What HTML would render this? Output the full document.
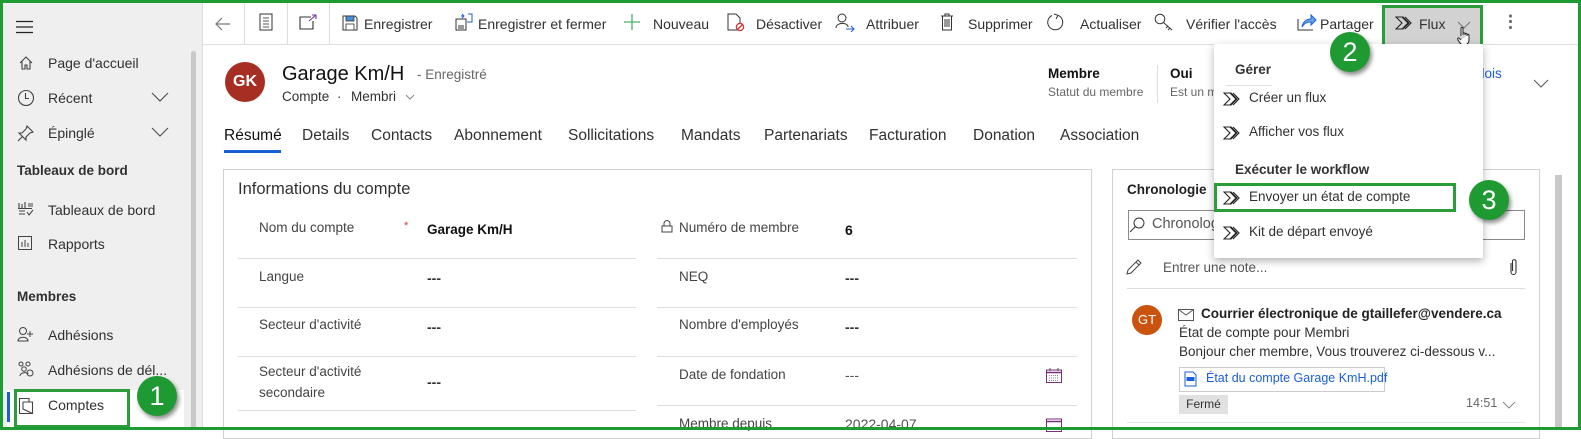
<!DOCTYPE html>
<html><head><meta charset="utf-8"><style>
*{margin:0;padding:0;box-sizing:border-box}
body{width:1581px;height:430px;overflow:hidden;background:#fff;font-family:"Liberation Sans",sans-serif;color:#323130;position:relative;font-size:14px}
.a{position:absolute;white-space:nowrap}
.side{position:absolute;left:0;top:0;width:203px;height:430px;background:#efefef;border-right:1px solid #ddd}
.tb{position:absolute;left:203px;top:0;right:0;height:45px;border-bottom:1px solid #ddd;background:#fff}
.sep{position:absolute;top:3px;width:1px;height:41px;background:#ddd}
.hline{position:absolute;height:1px;background:#ddd}
.badge{position:absolute;width:40px;height:40px;border-radius:50%;background:#1f9a33;color:#fff;font-size:27px;text-align:center;line-height:40px;box-shadow:2px 3px 4px rgba(0,0,0,.45)}
.gbox{position:absolute;border:3px solid #2a9d3a}
.ic{position:absolute}
</style></head><body>

<div class="side"></div>
<div class="a" style="left:191px;top:51px;width:5px;height:379px;background:#c8c8c8;border-radius:3px"></div>
<svg class="ic" style="left:16px;top:20px" width="18" height="14"><path d="M0 1.5H17M0 7H17M0 12.5H17" stroke="#222" stroke-width="1.3"/></svg>
<svg class="ic" style="left:18px;top:55px" width="16" height="16"><path d="M2 8L8 2L14 8M4 6V14H7V10H9V14H12V6" fill="none" stroke="#444" stroke-width="1.1"/></svg>
<div class="a" style="left:48px;top:55px">Page d'accueil</div>
<svg class="ic" style="left:17px;top:89px" width="18" height="18"><circle cx="9" cy="9" r="7.5" fill="none" stroke="#444" stroke-width="1.1"/><path d="M8.5 4V9.5H12" fill="none" stroke="#444" stroke-width="1.1"/></svg>
<div class="a" style="left:48px;top:90px">Récent</div>
<svg class="ic" style="left:151px;top:92px" width="18" height="10"><path d="M1 1L9 9L17 1" fill="none" stroke="#555" stroke-width="1.2"/></svg>
<svg class="ic" style="left:17px;top:125px" width="17" height="17"><path d="M10 1L16 7L13 8L9 12L9 15L2 8L5 8L9 4ZM5.5 11.5L1 16" fill="none" stroke="#444" stroke-width="1.1"/></svg>
<div class="a" style="left:48px;top:125px">Épinglé</div>
<svg class="ic" style="left:151px;top:127px" width="18" height="10"><path d="M1 1L9 9L17 1" fill="none" stroke="#555" stroke-width="1.2"/></svg>
<div class="a" style="left:17px;top:163px;font-weight:bold;font-size:13.5px">Tableaux de bord</div>
<svg class="ic" style="left:17px;top:201px" width="17" height="17"><path d="M2 2V7M5 3V7M8 1V7M1 7.5H15M11 3H16M11 5H16M2 10H8M2 13H8M10 11L12 14L16 9" fill="none" stroke="#444" stroke-width="1.1"/></svg>
<div class="a" style="left:48px;top:202px">Tableaux de bord</div>
<svg class="ic" style="left:17px;top:235px" width="16" height="16"><rect x="1.5" y="1.5" width="13" height="13" fill="none" stroke="#444"/><path d="M5 12V7M8 12V5M11 12V8" stroke="#444"/></svg>
<div class="a" style="left:48px;top:236px">Rapports</div>
<div class="a" style="left:17px;top:289px;font-weight:bold;font-size:13.5px">Membres</div>
<svg class="ic" style="left:17px;top:326px" width="18" height="16"><circle cx="6" cy="5" r="3.5" fill="none" stroke="#444"/><path d="M1 15C1 10 11 10 11 15ZM13 5V11M10 8H16" fill="none" stroke="#444"/></svg>
<div class="a" style="left:48px;top:327px">Adhésions</div>
<svg class="ic" style="left:17px;top:361px" width="18" height="16"><circle cx="4" cy="3" r="2" fill="none" stroke="#444"/><circle cx="11" cy="3" r="2" fill="none" stroke="#444"/><circle cx="7" cy="8" r="2.3" fill="none" stroke="#444"/><circle cx="13" cy="12" r="3" fill="none" stroke="#444"/><path d="M3 15C3 11 11 11 11 13" fill="none" stroke="#444"/></svg>
<div class="a" style="left:48px;top:362px">Adhésions de dél...</div>
<div class="a" style="left:7px;top:390px;width:177px;height:40px;background:#fff"></div>
<div class="a" style="left:7px;top:392px;width:3px;height:30px;background:#1a5fd6"></div>
<svg class="ic" style="left:18px;top:397px" width="16" height="18"><path d="M1.5 1.5H11V5H14.5V16.5H1.5ZM5 5H11M5 5V12L14.5 16.5" fill="none" stroke="#444" stroke-width="1.1"/></svg>
<div class="a" style="left:48px;top:397px">Comptes</div>
<div class="gbox" style="left:14px;top:389px;width:116px;height:39px"></div>
<div class="badge" style="left:137px;top:376px">1</div>

<div class="tb"></div>
<div class="sep" style="left:244px"></div><div class="sep" style="left:287px"></div><div class="sep" style="left:329px"></div>
<svg class="ic" style="left:215px;top:17px" width="16" height="14"><path d="M15 7H1M7 1L1 7L7 13" fill="none" stroke="#777" stroke-width="1.2"/></svg>
<svg class="ic" style="left:259px;top:13px" width="14" height="18"><rect x="1" y="1" width="12" height="16" fill="none" stroke="#333"/><path d="M4 5H10M4 8H10M4 11H10M4 14H10" stroke="#555"/></svg>
<svg class="ic" style="left:299px;top:14px" width="18" height="16"><path d="M12 3H1V15H14V7" fill="none" stroke="#333" stroke-width="1.1"/><path d="M10 7L17 1M13 1H17V5" fill="none" stroke="#7a2fa0" stroke-width="1.1"/></svg>
<svg class="ic" style="left:342px;top:15px" width="16" height="16"><path d="M1 1H13L15 3V15H1Z" fill="#fff" stroke="#333"/><rect x="4" y="1" width="8" height="5" fill="#4a90d9" stroke="#333" stroke-width=".8"/><rect x="4" y="9" width="8" height="6" fill="#fff" stroke="#333" stroke-width=".8"/></svg>
<div class="a" style="left:364px;top:16px">Enregistrer</div>
<svg class="ic" style="left:455px;top:13px" width="18" height="18"><path d="M1 6H11V17H1Z" fill="#fff" stroke="#333"/><rect x="3" y="12" width="6" height="5" fill="#999"/><path d="M6 3H9M7 1L9 3L7 5M13 1H17V9H12" fill="none" stroke="#1a5fd6"/></svg>
<div class="a" style="left:478px;top:16px">Enregistrer et fermer</div>
<svg class="ic" style="left:624px;top:14px" width="16" height="16"><path d="M8 0V16M0 8H16" stroke="#49b06b" stroke-width="1.3"/></svg>
<div class="a" style="left:653px;top:16px">Nouveau</div>
<svg class="ic" style="left:727px;top:13px" width="18" height="19"><path d="M1 1H9L13 5V17H1Z" fill="none" stroke="#333"/><circle cx="13" cy="14" r="3.6" fill="#fff" stroke="#d13438" stroke-width="1.3"/><path d="M10.5 16.5L15.5 11.5" stroke="#d13438" stroke-width="1.3"/></svg>
<div class="a" style="left:756px;top:16px">Désactiver</div>
<svg class="ic" style="left:835px;top:13px" width="20" height="19"><circle cx="7" cy="5" r="4" fill="none" stroke="#333"/><path d="M1 15C1 9 13 9 13 14" fill="none" stroke="#333"/><path d="M11 16H19M16 13L19 16L16 19" fill="none" stroke="#1a5fd6"/></svg>
<div class="a" style="left:866px;top:16px">Attribuer</div>
<svg class="ic" style="left:940px;top:13px" width="14" height="18"><path d="M1 3H13M5 3V1H9V3M2.5 3V17H11.5V3M5 6V14M7 6V14M9 6V14" fill="none" stroke="#333"/></svg>
<div class="a" style="left:968px;top:16px">Supprimer</div>
<svg class="ic" style="left:1046px;top:13px" width="19" height="19"><path d="M6 2.5A7.5 7.5 0 1 0 12 2.3M12 2.3L8 1M12 2.3L10 6" fill="none" stroke="#333"/></svg>
<div class="a" style="left:1080px;top:16px">Actualiser</div>
<svg class="ic" style="left:1154px;top:13px" width="20" height="18"><circle cx="6" cy="6" r="4.8" fill="none" stroke="#333"/><path d="M9.5 9.5L18 17M14 13L12 15M16 15L14 17" fill="none" stroke="#333"/></svg>
<div class="a" style="left:1186px;top:16px">Vérifier l'accès</div>
<svg class="ic" style="left:1297px;top:13px" width="20" height="18"><path d="M1 6V17H16" fill="none" stroke="#333"/><path d="M5 14C6 8 10 6 14 6V2L19 7L14 12V9C10 9 7 10 5 14Z" fill="#6aa6e0" stroke="#1a5fd6"/></svg>
<div class="a" style="left:1320px;top:16px">Partager</div>
<div class="a" style="left:1382px;top:5px;width:101px;height:41px;background:#d2d2d2"></div>
<svg class="ic" style="left:1395px;top:16px" width="18" height="14"><path d="M1 1H8L14 7L8 13H1L7 7ZM7 1L13 7L7 13M10 1L16 7L10 13" fill="none" stroke="#222" stroke-width="1.1"/></svg>
<div class="a" style="left:1419px;top:16px">Flux</div>
<svg class="ic" style="left:1457px;top:21px" width="14" height="8"><path d="M1 1L7 7L13 1" fill="none" stroke="#777"/></svg>
<svg class="ic" style="left:1456px;top:26px" width="16" height="20"><path d="M5 10V2.5C5 1 7 1 7 2.5V9M7 8C7 6.5 9 6.5 9 8V9M9 8.5C9 7 11 7 11 8.5V10M11 9.5C11 8 13 8 13 9.5V14C13 17 11 19 8 19C5 19 4 17 2 14C1 12 3 11 4 13L5 14" fill="#fff" stroke="#222" stroke-width="1"/></svg>
<div class="gbox" style="left:1382px;top:5px;width:101px;height:42px"></div>
<div class="a" style="left:1502px;top:12px;font-size:17px;font-weight:bold;color:#555">⋮</div>

<div class="a" style="left:225px;top:62px;width:40px;height:40px;border-radius:50%;background:#a72e22;color:#fff;font-weight:bold;font-size:16px;text-align:center;line-height:40px">GK</div>
<div class="a" style="left:282px;top:63px;font-size:20px;color:#111">Garage Km/H</div>
<div class="a" style="left:417px;top:67px;font-size:13.5px;color:#666">- Enregistré</div>
<div class="a" style="left:282px;top:89px;font-size:13.5px">Compte</div>
<div class="a" style="left:337px;top:89px;font-size:13.5px">·</div>
<div class="a" style="left:351px;top:89px;font-size:13.5px">Membri</div>
<svg class="ic" style="left:405px;top:94px" width="10" height="6"><path d="M1 1L5 5L9 1" fill="none" stroke="#888"/></svg>
<div class="a" style="left:1048px;top:66px;font-size:13.5px;font-weight:bold;color:#111">Membre</div>
<div class="a" style="left:1048px;top:85px;font-size:12px;color:#666">Statut du membre</div>
<div class="a" style="left:1157px;top:65px;width:1px;height:38px;background:#ddd"></div>
<div class="a" style="left:1170px;top:66px;font-size:13.5px;font-weight:bold;color:#111">Oui</div>
<div class="a" style="left:1170px;top:85px;font-size:12px;color:#666">Est un m</div>
<div class="a" style="left:1474px;top:66px;font-size:13.5px;color:#1a5fd6">glois</div>
<svg class="ic" style="left:1533px;top:79px" width="16" height="9"><path d="M1 1L8 8L15 1" fill="none" stroke="#555"/></svg>

<div class="a" style="left:224px;top:127px;font-size:15.5px;color:#111">Résumé</div>
<div class="a" style="left:224px;top:150px;width:57px;height:3px;background:#1a5fd6"></div>
<div class="a" style="left:302px;top:127px;font-size:15.5px">Details</div>
<div class="a" style="left:371px;top:127px;font-size:15.5px">Contacts</div>
<div class="a" style="left:454px;top:127px;font-size:15.5px">Abonnement</div>
<div class="a" style="left:568px;top:127px;font-size:15.5px">Sollicitations</div>
<div class="a" style="left:681px;top:127px;font-size:15.5px">Mandats</div>
<div class="a" style="left:764px;top:127px;font-size:15.5px">Partenariats</div>
<div class="a" style="left:869px;top:127px;font-size:15.5px">Facturation</div>
<div class="a" style="left:973px;top:127px;font-size:15.5px">Donation</div>
<div class="a" style="left:1060px;top:127px;font-size:15.5px">Association</div>

<div class="a" style="left:223px;top:169px;width:869px;height:270px;border:1px solid #d0d0d0"></div>
<div class="a" style="left:238px;top:180px;font-size:16.5px">Informations du compte</div>
<div class="a" style="left:259px;top:220px;font-size:13.5px;color:#444">Nom du compte</div>
<div class="a" style="left:404px;top:220px;font-size:11px;color:#d13438">*</div>
<div class="a" style="left:427px;top:222px;font-size:13.5px;font-weight:bold;color:#111">Garage Km/H</div>
<div class="hline" style="left:238px;top:258px;width:398px"></div>
<div class="a" style="left:259px;top:269px;font-size:13.5px;color:#444">Langue</div>
<div class="a" style="left:427px;top:270px;font-weight:bold">---</div>
<div class="hline" style="left:238px;top:307px;width:398px"></div>
<div class="a" style="left:259px;top:317px;font-size:13.5px;color:#444">Secteur d'activité</div>
<div class="a" style="left:427px;top:319px;font-weight:bold">---</div>
<div class="hline" style="left:238px;top:356px;width:398px"></div>
<div class="a" style="left:259px;top:361px;font-size:13.5px;color:#444;line-height:21px;white-space:normal;width:130px">Secteur d'activité secondaire</div>
<div class="a" style="left:427px;top:374px;font-weight:bold">---</div>
<div class="hline" style="left:238px;top:410px;width:398px"></div>

<svg class="ic" style="left:661px;top:220px" width="12" height="13"><path d="M3 6V3.5A3 3 0 0 1 9 3.5V6M1 6H11V12H1Z" fill="none" stroke="#444"/></svg>
<div class="a" style="left:679px;top:220px;font-size:13.5px;color:#444">Numéro de membre</div>
<div class="a" style="left:845px;top:222px;font-weight:bold;color:#111">6</div>
<div class="hline" style="left:657px;top:258px;width:420px"></div>
<div class="a" style="left:679px;top:269px;font-size:13.5px;color:#444">NEQ</div>
<div class="a" style="left:845px;top:270px;font-weight:bold">---</div>
<div class="hline" style="left:657px;top:307px;width:420px"></div>
<div class="a" style="left:679px;top:317px;font-size:13.5px;color:#444">Nombre d'employés</div>
<div class="a" style="left:845px;top:319px;font-weight:bold">---</div>
<div class="hline" style="left:657px;top:356px;width:420px"></div>
<div class="a" style="left:679px;top:367px;font-size:13.5px;color:#444">Date de fondation</div>
<div class="a" style="left:845px;top:367px;color:#555">---</div>
<svg class="ic" style="left:1046px;top:368px" width="16" height="15"><rect x=".5" y="2" width="15" height="12.5" fill="none" stroke="#7a2f7a"/><path d="M.5 4.5H15.5" stroke="#7a2f7a" stroke-width="1.5"/><path d="M4 0V3M12 0V3" stroke="#555"/><path d="M3 7.5H13M3 10H13M3 12.5H13" stroke="#888" stroke-dasharray="1 1"/></svg>
<div class="hline" style="left:657px;top:405px;width:420px"></div>
<div class="a" style="left:679px;top:416px;font-size:13.5px;color:#444">Membre depuis</div>
<div class="a" style="left:845px;top:416px;color:#555">2022-04-07</div>
<svg class="ic" style="left:1046px;top:417px" width="16" height="15"><rect x=".5" y="2" width="15" height="12.5" fill="none" stroke="#7a2f7a"/><path d="M.5 4.5H15.5" stroke="#7a2f7a" stroke-width="1.5"/></svg>

<div class="a" style="left:1112px;top:169px;width:428px;height:270px;border:1px solid #d0d0d0"></div>
<div class="a" style="left:1555px;top:175px;width:7px;height:255px;background:#c8c8c8"></div>
<div class="a" style="left:1127px;top:182px;font-size:13.5px;font-weight:bold;color:#222">Chronologie</div>
<div class="a" style="left:1128px;top:210px;width:397px;height:30px;border:1px solid #8a8a8a"></div>
<svg class="ic" style="left:1129px;top:217px" width="16" height="16"><circle cx="10" cy="6" r="5" fill="none" stroke="#333"/><path d="M6.5 9.5L1 15" stroke="#333"/></svg>
<div class="a" style="left:1152px;top:216px;font-size:14.5px;color:#555">Chronologie</div>
<svg class="ic" style="left:1126px;top:259px" width="16" height="16"><path d="M1 15L2 11L12 1L15 4L5 14ZM10 3L13 6" fill="none" stroke="#444"/></svg>
<div class="a" style="left:1163px;top:260px;font-size:13.5px;color:#555">Entrer une note...</div>
<svg class="ic" style="left:1509px;top:258px" width="9" height="18"><path d="M2 5V14A2.5 2.5 0 0 0 7 14V3A1.8 1.8 0 0 0 3.5 3V13" fill="none" stroke="#333" stroke-width="1.1"/></svg>
<div class="hline" style="left:1127px;top:288px;width:398px"></div>
<div class="a" style="left:1132px;top:305px;width:30px;height:30px;border-radius:50%;background:#c9530f;color:#fff;font-size:13px;text-align:center;line-height:30px">GT</div>
<svg class="ic" style="left:1178px;top:309px" width="16" height="12"><path d="M.5 .5H15.5V11.5H.5ZM.5 .5L8 6L15.5 .5" fill="none" stroke="#555"/></svg>
<div class="a" style="left:1201px;top:306px;font-size:13.5px;font-weight:bold;color:#222">Courrier électronique de gtaillefer@vendere.ca</div>
<div class="a" style="left:1179px;top:325px;font-size:13.5px">État de compte pour Membri</div>
<div class="a" style="left:1179px;top:344px;font-size:13.5px">Bonjour cher membre, Vous trouverez ci-dessous v...</div>
<div class="a" style="left:1179px;top:367px;width:206px;height:25px;border:1px solid #ccc"></div>
<svg class="ic" style="left:1184px;top:371px" width="13" height="16"><path d="M1 1H9L12 4V15H1Z" fill="#fff" stroke="#1a5fd6"/><rect x="2.5" y="6" width="8" height="4" fill="#1a5fd6"/></svg>
<div class="a" style="left:1206px;top:371px;font-size:12.5px;color:#1a5fd6">État du compte Garage KmH.pdf</div>
<div class="a" style="left:1179px;top:395px;width:49px;height:19px;background:#e1e1e1;font-size:12px;text-align:center;line-height:19px">Fermé</div>
<div class="a" style="left:1466px;top:396px;font-size:12.5px;color:#666">14:51</div>
<svg class="ic" style="left:1502px;top:401px" width="14" height="8"><path d="M1 1L7 7L13 1" fill="none" stroke="#888"/></svg>
<div class="hline" style="left:1127px;top:422px;width:398px;background:#e5e5e5"></div>

<div class="a" style="left:1214px;top:44px;width:269px;height:214px;background:#fff;box-shadow:0 3px 8px rgba(0,0,0,.3)"></div>
<div class="a" style="left:1235px;top:62px;font-size:13.5px;font-weight:bold;color:#333">Gérer</div>
<div class="hline" style="left:1226px;top:85px;width:46px;background:#e0e0e0"></div>
<svg class="ic" style="left:1223px;top:92px" width="18" height="14"><path d="M1 1H8L14 7L8 13H1L7 7ZM7 1L13 7L7 13M10 1L16 7L10 13" fill="none" stroke="#222" stroke-width="1.1"/></svg>
<div class="a" style="left:1249px;top:90px;font-size:13.5px">Créer un flux</div>
<svg class="ic" style="left:1223px;top:126px" width="18" height="14"><path d="M1 1H8L14 7L8 13H1L7 7ZM7 1L13 7L7 13M10 1L16 7L10 13" fill="none" stroke="#222" stroke-width="1.1"/></svg>
<div class="a" style="left:1249px;top:124px;font-size:13.5px">Afficher vos flux</div>
<div class="a" style="left:1235px;top:162px;font-size:13.5px;font-weight:bold;color:#333">Exécuter le workflow</div>
<svg class="ic" style="left:1223px;top:191px" width="18" height="14"><path d="M1 1H8L14 7L8 13H1L7 7ZM7 1L13 7L7 13M10 1L16 7L10 13" fill="none" stroke="#222" stroke-width="1.1"/></svg>
<div class="a" style="left:1249px;top:189px;font-size:13.5px">Envoyer un état de compte</div>
<div class="gbox" style="left:1214px;top:183px;width:242px;height:29px"></div>
<svg class="ic" style="left:1223px;top:226px" width="18" height="14"><path d="M1 1H8L14 7L8 13H1L7 7ZM7 1L13 7L7 13M10 1L16 7L10 13" fill="none" stroke="#222" stroke-width="1.1"/></svg>
<div class="a" style="left:1249px;top:224px;font-size:13.5px">Kit de départ envoyé</div>

<div class="badge" style="left:1330px;top:32px">2</div>
<div class="badge" style="left:1469px;top:180px">3</div>

<div class="a" style="left:0;top:0;width:1581px;height:430px;border:3px solid #1e9b32"></div>
</body></html>
